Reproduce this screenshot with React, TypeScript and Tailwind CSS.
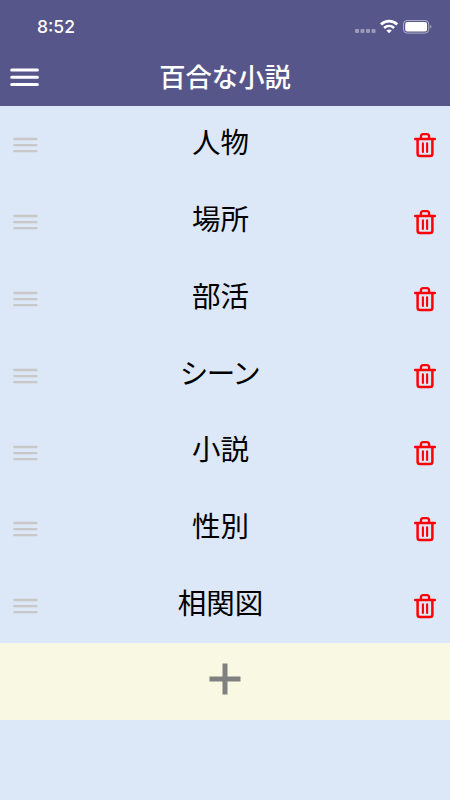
const categories = [
  { name: '人物' },
  { name: '場所' },
  { name: '部活' },
  { name: 'シーン', kana: true },
  { name: '小説' },
  { name: '性別' },
  { name: '相関図' },
];

const StatusBar = () => {
  return (
    <div className="flex h-[54px] items-center justify-between pl-[37px] pr-[17px]">
      <span className="font-[Inter,sans-serif] text-[17.5px] font-medium leading-none">8:52</span>
      <div className="flex items-center">
        <svg className="h-4 w-[78px]" viewBox="0 0 78 16" fill="none">
          <g fill="#fff" opacity="0.4">
            <rect x="0" y="10" width="4" height="4" rx="1" />
            <rect x="5.5" y="10" width="4" height="4" rx="1" />
            <rect x="11" y="10" width="4" height="4" rx="1" />
            <rect x="16.5" y="10" width="4" height="4" rx="1" />
          </g>
          <path d="M26 5.5C30.6 1 37.6 1 42.2 5.5" stroke="#fff" strokeWidth="2.8" />
          <path d="M29.1 9C32 6.3 36.2 6.3 39.1 9" stroke="#fff" strokeWidth="2.6" />
          <path d="M31.4 11.5C33.1 10 35.1 10 36.8 11.5L34.1 14.2Z" fill="#fff" />
          <rect x="48.5" y="1.5" width="25.2" height="12.6" rx="3.6" stroke="#fff" strokeOpacity="0.5" />
          <rect x="50.2" y="3.1" width="21.8" height="9.4" rx="2" fill="#fff" />
          <path d="M75.2 5.8C76.9 6.4 76.9 9.1 75.2 9.7Z" fill="#fff" fillOpacity="0.5" />
        </svg>
      </div>
    </div>
  );
};

const TrashIcon = () => {
  return (
    <svg className="h-[26px] w-6" viewBox="0 0 24 26" fill="none" stroke="#ff0008">
      <path d="M2.2 6.9H21.8" strokeWidth="2.5" strokeLinecap="round" />
      <path d="M7.9 6V4.6C7.9 3 8.8 2.2 10.2 2.2H13.8C15.2 2.2 16.1 3 16.1 4.6V6" strokeWidth="2.3" />
      <path d="M4.6 7V21.8C4.6 23.3 5.4 24.1 6.9 24.1H17.1C18.6 24.1 19.4 23.3 19.4 21.8V7" strokeWidth="2.5" />
      <path d="M9.9 11.2V19.9M14.1 11.2V19.9" strokeWidth="2.1" strokeLinecap="round" />
    </svg>
  );
};

const CategoryRow = ({ name, kana }: { name: string; kana?: boolean }) => {
  return (
    <li className="flex h-[76.8px] items-center justify-between pl-[13px] pr-[13px]">
      <button aria-label="並べ替え" className="pt-[3px]">
        <svg className="h-4 w-[25px]" viewBox="0 0 25 16" stroke="#c8c8c8" strokeWidth="2.3" strokeLinecap="round">
          <path d="M1.3 2H23.5M1.3 8.1H23.5M1.3 14.2H23.5" />
        </svg>
      </button>
      <span
        className={
          kana
            ? 'pb-[5px] pr-[12px] text-[28.5px] leading-none tracking-[-1.5px] text-black'
            : 'pb-[5px] pr-[10px] text-[28.5px] leading-none text-black'
        }
      >
        {name}
      </span>
      <button aria-label="削除" className="pt-[3px]">
        <TrashIcon />
      </button>
    </li>
  );
};

export default function App() {
  return (
    <div className="h-[800px] w-[450px] overflow-hidden bg-[#dce7f7] font-['Noto_Sans_CJK_JP',sans-serif]">
      <header className="h-[105.5px] bg-[#57568b] text-white">
        <StatusBar />
        <div className="grid h-[46px] grid-cols-[40px_1fr_40px] items-center">
          <button aria-label="メニュー" className="ml-[10px]">
            <svg className="h-5 w-[29px]" viewBox="0 0 29 20" stroke="#fff" strokeWidth="3" strokeLinecap="round">
              <path d="M1.7 2.9H27.4M1.7 10.2H27.4M1.7 17.4H27.4" />
            </svg>
          </button>
          <h1 className="pb-[2px] text-center text-[26.3px] font-medium leading-none">百合な小説</h1>
        </div>
      </header>

      <ul>
        {categories.map((category) => (
          <CategoryRow key={category.name} name={category.name} kana={category.kana} />
        ))}
      </ul>

      <button aria-label="追加" className="flex h-[76.8px] w-full items-center justify-center bg-[#f8f8e3] pb-[5px]">
        <svg className="h-8 w-8" viewBox="0 0 32 32" stroke="#808080" strokeWidth="5">
          <path d="M0.5 16H31.5M16 0.5V31.5" />
        </svg>
      </button>
    </div>
  );
}
